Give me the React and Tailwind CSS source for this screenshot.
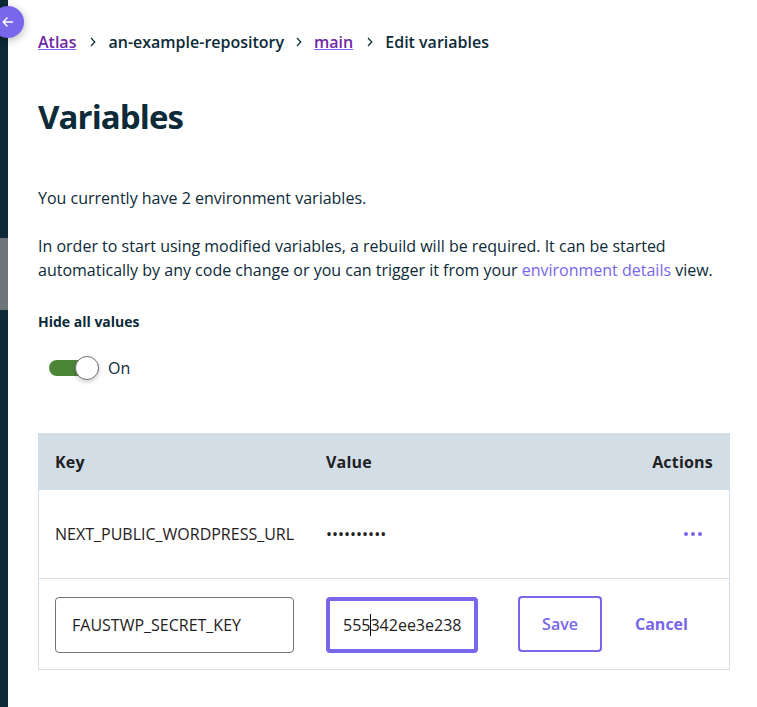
const Chevron = () => (
  <svg width="8" height="12" viewBox="0 0 8 12" fill="none" stroke="#0c2a38" strokeWidth="1.2" className="shrink-0"><path d="M2 2l3.800 4L2 10" /></svg>
);

export default function App() {
  return (
    <div className="flex h-[707px] w-[757px] overflow-hidden bg-white text-base leading-6 text-[#0c2a38]" style={{ fontFamily: '"Open Sans", sans-serif' }}>
      <aside className="relative w-2 shrink-0 bg-[#0c2a38] pt-[238px]">
        <div className="h-[72px] bg-[#6d747a]" />
        <button className="absolute -left-2 top-1.5 flex size-8 items-center justify-center rounded-full bg-[#7866eb] shadow-[0_2px_8px_rgba(0,0,0,0.3)]">
          <svg width="12" height="12" viewBox="0 0 12 12" fill="none" stroke="white" strokeWidth="1.5" strokeLinecap="round" strokeLinejoin="round"><path d="M10.500 6H1.500M5 2L1.200 6L5 10" /></svg>
        </button>
      </aside>
      <main className="w-[722px] pl-[30px] pt-[30px]">
        <nav className="flex h-6 items-center font-semibold whitespace-nowrap">
          <a className="mr-[13px] text-[#7029a4] underline decoration-[#7866eb]">Atlas</a><Chevron />
          <span className="mx-[11px]">an-example-repository</span><Chevron />
          <a className="ml-[11px] mr-[13px] text-[#7029a4] underline decoration-[#7866eb]">main</a><Chevron />
          <span className="ml-[11px]">Edit variables</span>
        </nav>
        <h1 className="mt-[39px] text-[33px] font-bold leading-12 tracking-[-0.9px]">Variables</h1>
        <p className="mt-[45px]">You currently have 2 environment variables.</p>
        <p className="mt-6 whitespace-nowrap">In order to start using modified variables, a rebuild will be required. It can be started<br />automatically by any code change or you can trigger it from your <a className="text-[#7866eb]">environment details</a> view.</p>
        <h2 className="mt-7 text-sm font-bold leading-6">Hide all values</h2>
        <div className="mt-[22px] flex h-6 items-center pl-[11px]">
          <div className="flex h-4 w-[50px] items-center justify-end rounded-full bg-[#4d8538]"><span className="size-6 rounded-full border border-[#6d747a] bg-white shadow-[0_2px_4px_rgba(0,0,0,0.2)]" /></div>
          <span className="ml-[9px]">On</span>
        </div>
        <section className="mt-[53px] h-[237px] w-[692px] border border-[#d3dde6] text-[#1f2123]">
          <div className="flex h-14 items-center bg-[#d3dde6] px-4 font-bold tracking-[0.2px]"><span className="w-[271px]">Key</span><span>Value</span><span className="ml-auto">Actions</span></div>
          <div className="flex h-[89px] items-center border-b border-[#d3dde6] pl-4 pr-[27px]"><span className="w-[271px]">NEXT_PUBLIC_WORDPRESS_URL</span><span>••••••••••</span><span className="ml-auto flex gap-[3px]"><i className="size-1 rounded-full bg-[#7866eb]" /><i className="size-1 rounded-full bg-[#7866eb]" /><i className="size-1 rounded-full bg-[#7866eb]" /></span></div>
          <div className="flex items-start pl-4 pt-[17px]">
            <div className="mt-px flex h-14 w-[239px] items-center rounded border border-[#6d747a] pl-4">FAUSTWP_SECRET_KEY</div>
            <div className="ml-8 mt-px flex h-14 w-[152px] items-center rounded border-4 border-[#7866eb] pl-[13px]">555<i className="-mr-px h-[22px] w-px bg-black" />342ee3e238</div>
            <button className="ml-10 h-14 w-[84px] rounded border-2 border-[#7866eb] font-semibold text-[#7866eb]">Save</button>
            <button className="ml-[33px] h-14 font-bold text-[#7866eb]">Cancel</button>
          </div>
        </section>
      </main>
    </div>
  );
}
